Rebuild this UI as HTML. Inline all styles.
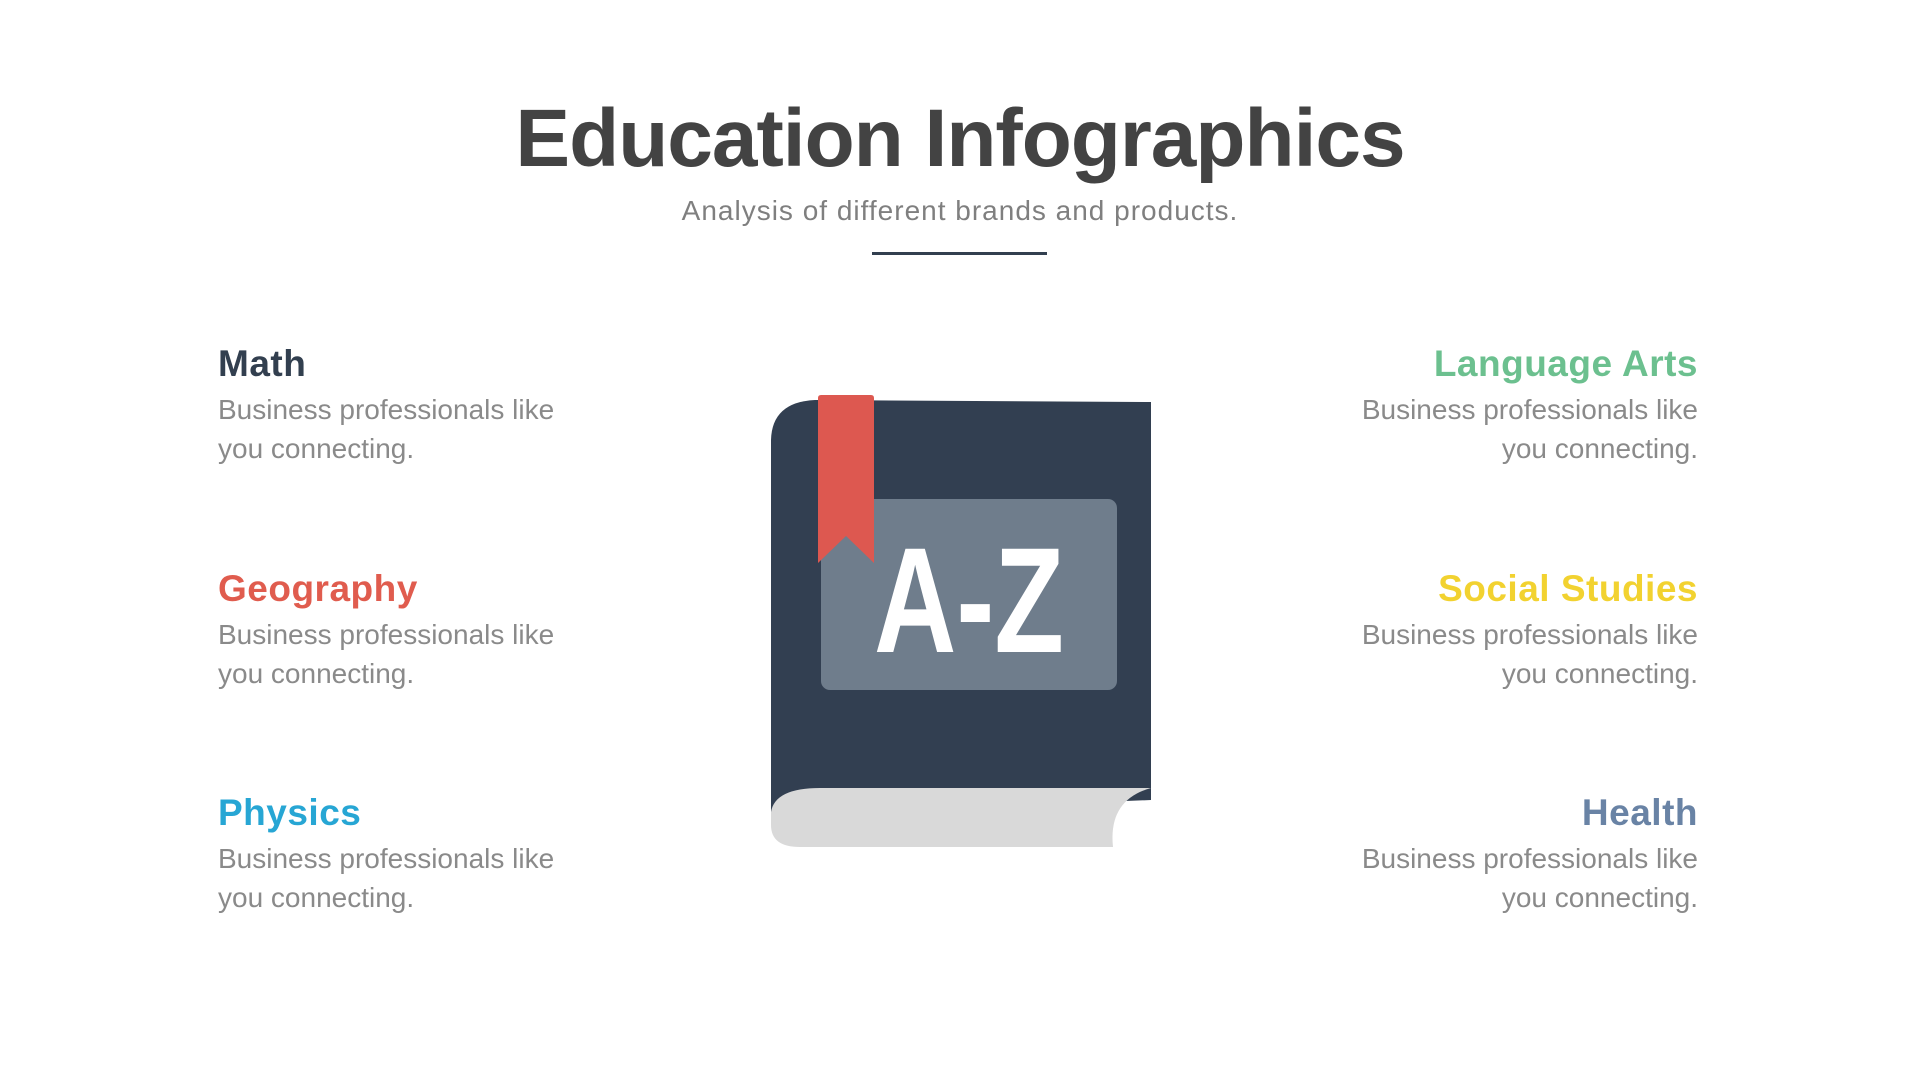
<!DOCTYPE html>
<html><head><style>
body{margin:0;width:1920px;height:1080px;background:#fff;font-family:"Liberation Sans",sans-serif;position:relative;overflow:hidden}
.t{position:absolute;left:0;width:1920px;text-align:center}
h1{position:absolute;left:0;width:1920px;text-align:center;top:92px;margin:0;font-size:82px;font-weight:bold;color:#434343;letter-spacing:-1px}
.sub{top:195px;font-size:28px;color:#7f7f7f;letter-spacing:1px}
.line{position:absolute;left:872px;top:252px;width:175px;height:3px;background:#323f4f}
.item{position:absolute;width:440px}
.item h2{margin:0;font-size:37px;font-weight:bold;line-height:46px;letter-spacing:0.5px}
.item p{margin:3px 0 0;font-size:28px;line-height:39px;color:#8a8a8a;letter-spacing:0px}
.l{left:218px;text-align:left}
.r{right:222px;text-align:right}
</style></head><body>
<h1>Education Infographics</h1>
<div class="t sub">Analysis of different brands and products.</div>
<div class="line"></div>

<div class="item l" style="top:341px"><h2 style="color:#323f4f">Math</h2><p>Business professionals like<br>you connecting.</p></div>
<div class="item l" style="top:566px"><h2 style="color:#e05c4e">Geography</h2><p>Business professionals like<br>you connecting.</p></div>
<div class="item l" style="top:790px"><h2 style="color:#27a6d4">Physics</h2><p>Business professionals like<br>you connecting.</p></div>
<div class="item r" style="top:341px"><h2 style="color:#6cc08f">Language Arts</h2><p>Business professionals like<br>you connecting.</p></div>
<div class="item r" style="top:566px"><h2 style="color:#f2d230">Social Studies</h2><p>Business professionals like<br>you connecting.</p></div>
<div class="item r" style="top:790px"><h2 style="color:#6983a5">Health</h2><p>Business professionals like<br>you connecting.</p></div>

<svg style="position:absolute;left:0;top:0" width="1920" height="1080">
<path d="M771,440 Q772,402 815,400 L1151,402 L1151,800 L771,815 Z" fill="#323f51"/>
<path d="M771,812 Q775,788 820,788 L1151,788 Q1108,800 1113,847 L800,847 Q771,847 771,825 Z" fill="#d9d9d9"/>
<rect x="821" y="499" width="296" height="191" rx="9" fill="#6f7d8c"/>
<text x="874" y="652" textLength="190" lengthAdjust="spacingAndGlyphs" font-family="Liberation Sans, sans-serif" font-weight="bold" font-size="150" fill="#fff">A-Z</text>
<path d="M818,398 Q818,395 821,395 L871,395 Q874,395 874,398 L874,563 L846,536 L818,563 Z" fill="#dd5850"/>
</svg>
</body></html>
